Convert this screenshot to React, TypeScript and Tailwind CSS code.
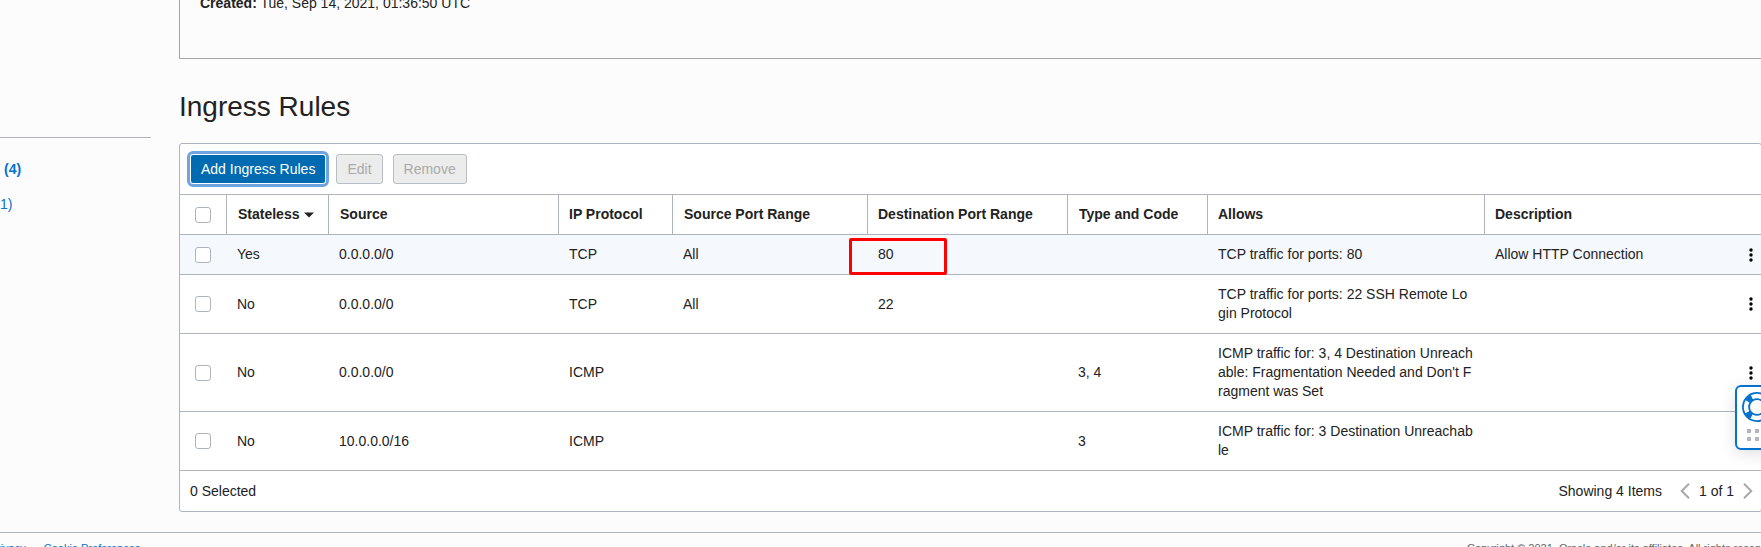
import React from "react";

type Rule = {
  stateless: string;
  source: string;
  protocol: string;
  sourcePorts: string;
  destPorts: string;
  typeCode: string;
  allows: string;
  description: string;
  marked?: boolean;
};

const rules: Rule[] = [
  { stateless: "Yes", source: "0.0.0.0/0", protocol: "TCP", sourcePorts: "All", destPorts: "80", typeCode: "", allows: "TCP traffic for ports: 80", description: "Allow HTTP Connection", marked: true },
  { stateless: "No", source: "0.0.0.0/0", protocol: "TCP", sourcePorts: "All", destPorts: "22", typeCode: "", allows: "TCP traffic for ports: 22 SSH Remote Login Protocol", description: "" },
  { stateless: "No", source: "0.0.0.0/0", protocol: "ICMP", sourcePorts: "", destPorts: "", typeCode: "3, 4", allows: "ICMP traffic for: 3, 4 Destination Unreachable: Fragmentation Needed and Don't Fragment was Set", description: "" },
  { stateless: "No", source: "10.0.0.0/16", protocol: "ICMP", sourcePorts: "", destPorts: "", typeCode: "3", allows: "ICMP traffic for: 3 Destination Unreachable", description: "" },
];

const headings = ["Source", "IP Protocol", "Source Port Range", "Destination Port Range", "Type and Code", "Allows", "Description"];

function Check({ label }: { label: string }) {
  return (
    <input
      type="checkbox"
      aria-label={label}
      className="ml-[15px] block size-4 appearance-none rounded-[3px] border border-[#aeb4be] bg-white checked:bg-[#006bb0]"
    />
  );
}

function Kebab() {
  return (
    <svg width="4" height="14" viewBox="0 0 4 14" fill="#000" aria-hidden="true">
      <circle cx="2" cy="2" r="1.7" />
      <circle cx="2" cy="7" r="1.7" />
      <circle cx="2" cy="12" r="1.7" />
    </svg>
  );
}

function Chevron({ flip = false }: { flip?: boolean }) {
  return (
    <svg width="10" height="16" viewBox="0 0 10 16" fill="none" stroke="#a9a9a9" strokeWidth="2" aria-hidden="true">
      <path d={flip ? "M1 .8 8.3 8 1 15.2" : "M9 .8 1.7 8 9 15.2"} />
    </svg>
  );
}

function HelpWidget() {
  return (
    <button
      type="button"
      aria-label="Help"
      className="absolute -right-[18px] top-[385px] flex w-11 flex-col items-center gap-[7px] rounded-md border-2 border-[#0572ce] bg-white pt-[5px] pb-[7px] shadow-[0_4px_16px_rgba(0,0,0,0.12)]"
    >
      <svg width="30" height="30" viewBox="0 0 30 30" fill="none" aria-hidden="true">
        <circle cx="15" cy="15" r="11" stroke="#0572ce" strokeWidth="8" />
        <circle cx="15" cy="15" r="11" stroke="#fff" strokeWidth="4.4" strokeDasharray="11.3 5.98" strokeDashoffset="5.65" />
      </svg>
      <svg width="20" height="12" viewBox="0 0 20 12" fill="#b0b6bd" aria-hidden="true">
        <path d="M0 0h4v4H0zM8 0h4v4H8zM16 0h4v4h-4zM0 8h4v4H0zM8 8h4v4H8zM16 8h4v4h-4z" />
      </svg>
    </button>
  );
}

export default function App() {
  return (
    <div className="relative h-screen overflow-hidden bg-[#fcfcfc] font-['Liberation_Sans',Arial,sans-serif] text-sm leading-[19px] text-[#222]">
      <div className="flex">
        <nav aria-label="Resources" className="w-[151px] shrink-0 pt-[137px]">
          <div className="flex flex-col gap-4 border-t border-[#aeb4be] pt-[22px] text-[#0572ce]">
            <a href="#ingress" className="pl-1 font-bold">(4)</a>
            <a href="#egress">1)</a>
          </div>
        </nav>

        <main className="-mr-px ml-7 min-w-0 flex-1">
          <section className="flex h-[59px] items-start border-b border-l border-[#a5a5a5] pl-5">
            <p className="-mt-1.5">
              <strong>Created:</strong> Tue, Sep 14, 2021, 01:36:50 UTC
            </p>
          </section>

          <h1 className="mt-8 mb-5 text-[28px] leading-8">Ingress Rules</h1>

          <section className="rounded-[3px] border border-[#aeb4be] bg-white">
            <div className="flex items-center gap-2.5 p-2.5">
              <button type="button" className="h-[30px] rounded-[3px] border border-white bg-[#006bb0] px-2.5 text-white outline-3 outline-[#70a4e1]">
                Add Ingress Rules
              </button>
              <button type="button" disabled className="h-[30px] rounded-[3px] border border-[#b8bdc5] bg-[#ececec] px-2.5 text-[#aaa]">
                Edit
              </button>
              <button type="button" disabled className="h-[30px] rounded-[3px] border border-[#b8bdc5] bg-[#ececec] px-2.5 text-[#aaa]">
                Remove
              </button>
            </div>

            <table className="w-full table-fixed border-separate border-spacing-0 border-t border-[#aeb4be] text-left">
              <colgroup>
                <col className="w-[47px]" />
                <col className="w-[102px]" />
                <col className="w-[230px]" />
                <col className="w-[114px]" />
                <col className="w-[195px]" />
                <col className="w-[200px]" />
                <col className="w-[140px]" />
                <col className="w-[277px]" />
                <col />
                <col className="w-7" />
              </colgroup>
              <thead>
                <tr className="*:border-b *:border-[#aeb4be]">
                  <th className="border-r"><Check label="Select all rules" /></th>
                  <th className="border-r py-2.5 pl-[11px]">
                    <button type="button" className="flex items-center gap-[5px] font-bold">
                      Stateless
                      <svg width="10" height="6" viewBox="0 0 10 6" fill="#222" aria-hidden="true"><path d="M0 .5h10L5 5.5z" /></svg>
                    </button>
                  </th>
                  {headings.map((h) => (
                    <th key={h} className="border-r py-2.5 pl-[11px] nth-[4]:pl-2.5 nth-[6]:pl-2.5 nth-[8]:pl-2.5 nth-[9]:border-r-0 nth-[9]:pl-2.5">{h}</th>
                  ))}
                  <th aria-label="Actions" />
                </tr>
              </thead>
              <tbody>
                {rules.map((r, i) => (
                  <tr key={i} className="*:border-b *:border-[#aeb4be] first:bg-[#f5f8fd]">
                    <td><Check label={`Select rule ${i + 1}`} /></td>
                    <td className="p-2.5">{r.stateless}</td>
                    <td className="p-2.5">{r.source}</td>
                    <td className="p-2.5">{r.protocol}</td>
                    <td className="p-2.5">{r.sourcePorts}</td>
                    <td className="relative p-2.5">
                      {r.destPorts}
                      {r.marked && (
                        <span className="absolute -left-[19px] top-[3px] h-[37px] w-[98px] rounded-xs border-3 border-[#ff0000]" />
                      )}
                    </td>
                    <td className="p-2.5">{r.typeCode}</td>
                    <td className="p-2.5 break-all">{r.allows}</td>
                    <td className="p-2.5">{r.description}</td>
                    <td>
                      <button type="button" aria-label={`Actions for rule ${i + 1}`} className="ml-4 block">
                        <Kebab />
                      </button>
                    </td>
                  </tr>
                ))}
              </tbody>
            </table>

            <div className="flex h-10 items-center justify-between pr-2 pl-2.5">
              <span>0 Selected</span>
              <div className="flex items-center">
                <span className="mr-[18px]">Showing 4 Items</span>
                <button type="button" aria-label="Previous page"><Chevron /></button>
                <span className="mx-[9px]">1 of 1</span>
                <button type="button" aria-label="Next page"><Chevron flip /></button>
              </div>
            </div>
          </section>
        </main>
      </div>

      <footer className="mt-5 flex justify-between border-t border-[#aeb4be] pt-1.5 text-[11px] whitespace-nowrap">
        <div className="-ml-[3px] flex gap-[18px] text-[#0572ce]">
          <a href="#privacy">rivacy</a>
          <a href="#cookies">Cookie Preferences</a>
        </div>
        <span className="w-[294px] text-[#666]">Copyright © 2021, Oracle and/or its affiliates. All rights reserved.</span>
      </footer>

      <HelpWidget />
    </div>
  );
}
